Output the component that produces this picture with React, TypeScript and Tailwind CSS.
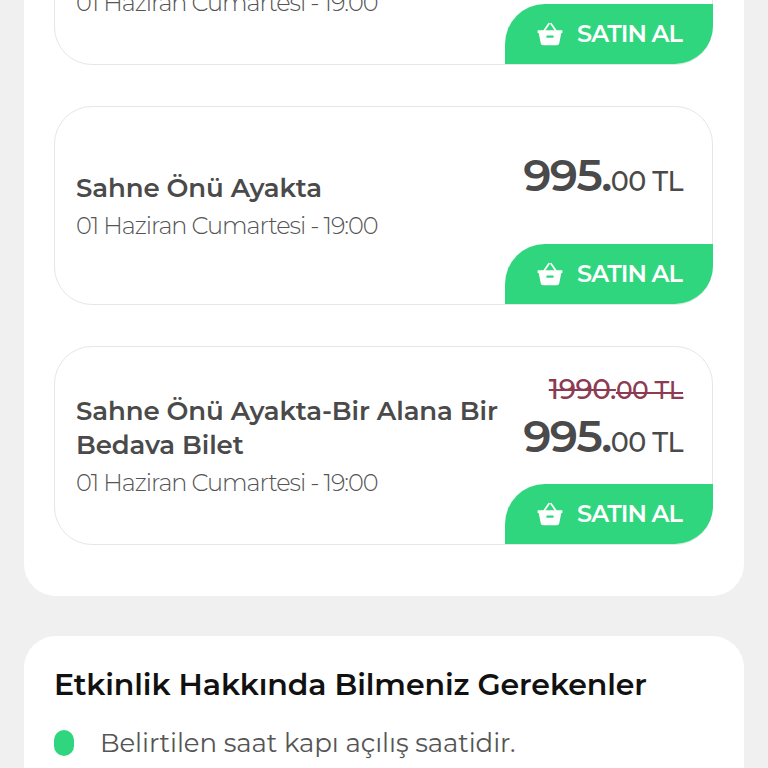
const font = "font-['Montserrat','Inter','Liberation_Sans',sans-serif]";

function Basket() {
  return (
    <svg width="28" height="28" viewBox="0 0 26 26" fill="none">
      <path d="M7.5 10 L12 3.5 M18.500 10 L14 3.5" stroke="#fff" strokeWidth="1.6" strokeLinecap="round" />
      <path
        d="M1.500 9.500h23v2.600h-1l-1.900 9.600c-.2 1.200-1.100 1.800-2.200 1.800H6.600c-1.100 0-2-.6-2.200-1.800L2.500 12.100h-1z"
        fill="#fff"
      />
      <rect x="9.500" y="14.500" width="7" height="2" rx="1" fill="#2fd67d" />
    </svg>
  );
}

function Ticket({ title, oldPrice }: { title: React.ReactNode; oldPrice?: boolean }) {
  return (
    <div className="flex h-[199px] rounded-[38px] border border-[#e6e6e6] bg-white">
      <div className="flex flex-1 flex-col justify-center pt-[2px] pl-[21px]">
        <div className="text-[26px] leading-[34px] font-semibold tracking-[-0.1px] text-[#4a4a4a] whitespace-nowrap">{title}</div>
        <div className="mt-[4px] text-[24px] leading-[34px] font-light tracking-[-1.05px] text-[#555555] whitespace-nowrap">
          01 Haziran Cumartesi - 19:00
        </div>
      </div>
      <div className="flex w-[208px] flex-col items-end">
        <div className="flex flex-1 flex-col items-end justify-center pt-[10px] pr-[29px]">
          {oldPrice && (
            <div className="text-[28px] leading-[40px] font-medium tracking-[-0.5px] text-[#8c3b52] line-through">
              1990.<span className="text-[25px]">00 TL</span>
            </div>
          )}
          <div className="text-[#4a4a4a] leading-[52px] font-semibold">
            <span className="text-[45px] tracking-[-1.5px]">995.</span>
            <span className="text-[27px] font-medium tracking-[-0.6px]">00 TL</span>
          </div>
        </div>
        <div className="-mr-px flex h-[60px] w-[208px] items-center justify-center gap-[13px] rounded-tl-[40px] rounded-br-[38px] bg-[#2fd67d]">
          <Basket />
          <span className="text-[24px] font-semibold tracking-[-1px] text-white">SATIN AL</span>
        </div>
      </div>
    </div>
  );
}

export default function App() {
  return (
    <div className={`h-[768px] overflow-hidden bg-[#f0f0f0] ${font}`}>
      <div className="mx-6 -mt-[134px] flex flex-col gap-[41px] rounded-b-[32px] bg-white pr-[31px] pb-[51px] pl-[30px]">
        <Ticket title={<>Sahne Önü Ayakta-Bir Alana Bir<br />Bedava Bilet</>} />
        <Ticket title="Sahne Önü Ayakta" />
        <Ticket title={<>Sahne Önü Ayakta-Bir Alana Bir<br />Bedava Bilet</>} oldPrice />
      </div>
      <div className="mx-6 mt-10 rounded-t-[32px] bg-white px-[30px] pt-[30px] pb-10">
        <h2 className="text-[30px] leading-[38px] font-semibold tracking-[-0.1px] text-[#111111]">
          Etkinlik Hakkında Bilmeniz Gerekenler
        </h2>
        <div className="mt-[22px] flex items-center gap-[26px]">
          <span className="h-[26px] w-5 rounded-full bg-[#2fd67d]" />
          <span className="text-[26px] leading-[34px] tracking-[-0.1px] text-[#555555]">Belirtilen saat kapı açılış saatidir.</span>
        </div>
      </div>
    </div>
  );
}
